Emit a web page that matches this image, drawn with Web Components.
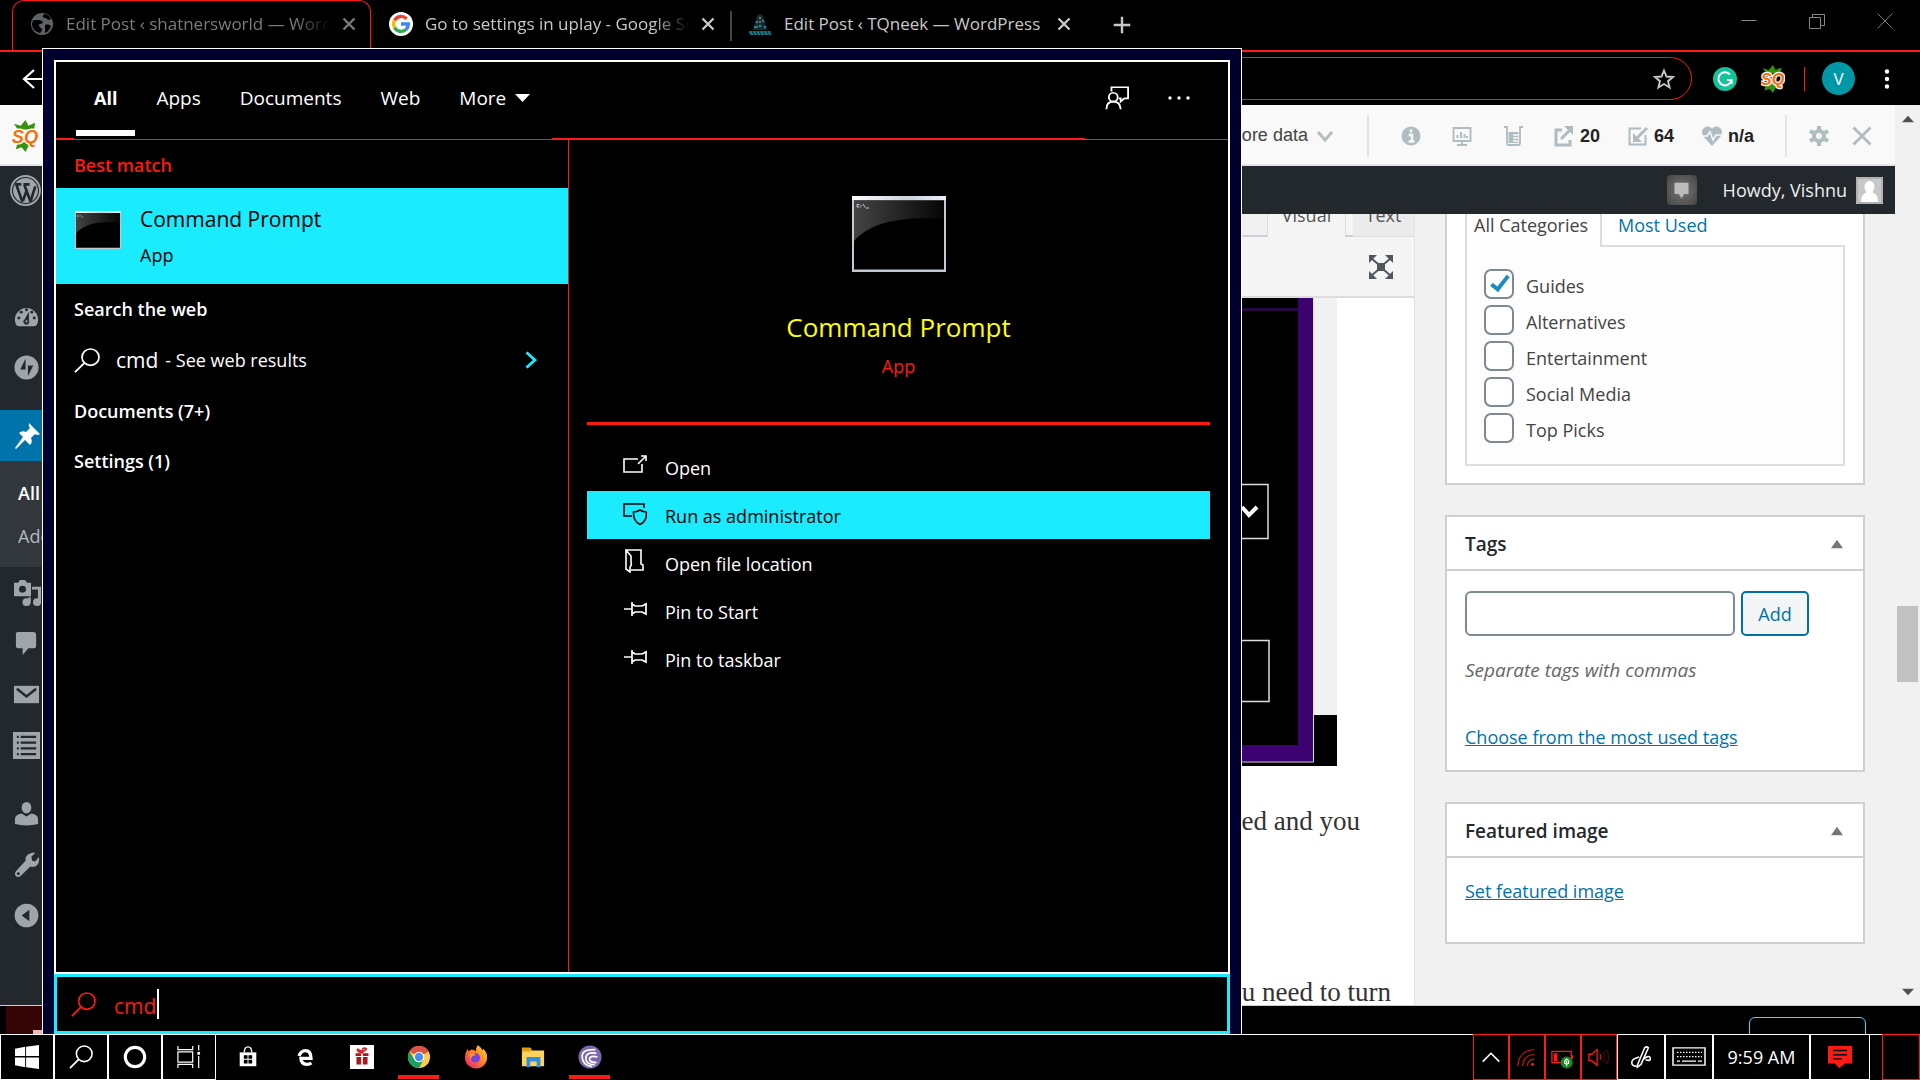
<!DOCTYPE html>
<html lang="en">
<head>
<meta charset="utf-8">
<title>Desktop</title>
<style>
html,body{margin:0;height:100%;background:#000}
body{font-family:"Open Sans","Noto Sans",sans-serif;font-size:18px;color:#fff;overflow:hidden}
</style>
</head>
<body>
<desk-top></desk-top>
<script>
const ICONS = {
globe:['0 0 24 24','<circle cx="12" cy="12" r="11" fill="#5f6368"/><path d="M3 8c3 1 6-1 9 1 2 1 0 3-2 3s-1 3 1 4 1 3-1 5c-5-1-8-5-8-9zM14 2c-2 2-1 4 1 4s2 2 4 2l2-1c-1-3-4-5-7-5zM15 13c2-1 5 0 6 1-1 3-3 6-6 7-1-2 1-3 0-5z" fill="#000"/>'],
google:['0 0 24 24','<circle cx="12" cy="12" r="12" fill="#fff"/><g fill="none" stroke-width="3.4"><path d="M17.6 6.8A7.4 7.4 0 0 0 5.6 8.4" stroke="#ea4335"/><path d="M5.6 8.4a7.4 7.4 0 0 0 0 7.2" stroke="#fbbc05"/><path d="M5.6 15.6A7.4 7.4 0 0 0 17 17.4" stroke="#34a853"/><path d="M17 17.4A7.4 7.4 0 0 0 19.4 12H12" stroke="#4285f4"/></g>'],
tq:['0 0 24 24','<path d="M5 18 9 4q3-4 6 0l4 14z" fill="#0d3038"/><g fill="#2a7f95"><circle cx="9" cy="10" r="1.3"/><circle cx="15" cy="9" r="1.3"/><circle cx="12" cy="14" r="1.3"/><circle cx="7" cy="15" r="1.3"/><circle cx="17" cy="15" r="1.3"/></g><g fill="#b9682b"><circle cx="12" cy="6" r="1.2"/><circle cx="12" cy="10" r="1"/><circle cx="9" cy="15" r="1"/></g><path d="M1 20h22M2 22h21" stroke="#137484" stroke-width="2" stroke-dasharray="3 .7"/>'],
close:['0 0 24 24','<path d="M6 6l12 12M18 6 6 18" stroke="currentColor" stroke-width="2.6"/>'],
plus:['0 0 24 24','<path d="M12 3v18M3 12h18" stroke="#c8c8c8" stroke-width="2.6"/>'],
min:['0 0 24 24','<path d="M4.5 11.5h15" stroke="#888" stroke-width="1"/>'],
restore:['0 0 24 24','<path d="M4.5 8.5h11v11h-11zM7.5 8V5.5h12v11H16" fill="none" stroke="#888"/>'],
wclose:['0 0 24 24','<path d="M4.5 4.5l15 15M19.5 4.5l-15 15" stroke="#777"/>'],
back:['0 0 24 24','<path d="M13 3 3 12l10 9M3.500 12H24" fill="none" stroke="#fff" stroke-width="2.2"/>'],
star:['0 0 24 24','<path d="M12 3.500l2.500 6 6.500.5-5 4.200 1.600 6.300L12 17l-5.600 3.500L8 14.200 3 10l6.500-.5z" fill="none" stroke="#c6c6c6" stroke-width="1.900"/>'],
gram:['0 0 24 24','<circle cx="12" cy="12" r="12" fill="#15c39a"/><path d="M17 7.500a6.600 6.600 0 1 0 1.500 5.500H14M18.600 12.500v4.500" fill="none" stroke="#fff" stroke-width="2"/>'],
sq:['0 0 28 34','<path d="M14 0l3 6 7-3-1 7H6L2 4l7 2zM14 34l-4-5-6 2 2-8h16l-1 6-4-1z" fill="#36910c"/><text x="13.500" y="24.500" text-anchor="middle" font-family="Liberation Sans" font-weight="700" font-style="italic" font-size="19" fill="#ff6d0a" stroke="#fff" stroke-width="3" paint-order="stroke" stroke-linejoin="round">SQ</text>'],
dots:['0 0 24 24','<g fill="#fff"><circle cx="12" cy="4.500" r="2.200"/><circle cx="12" cy="12" r="2.200"/><circle cx="12" cy="19.500" r="2.200"/></g>'],
chev:['0 0 24 24','<path d="M5 8l7 8 7-8" fill="none" stroke="#b4bcbe" stroke-width="3"/>'],
info:['0 0 24 24','<circle cx="12" cy="12" r="9.500" fill="#afbcc0"/><path d="M12 5.500v3M9.500 11H13v6M9.500 17.500h6" fill="none" stroke="#f9f9f9" stroke-width="2.400"/>'],
monitor:['0 0 24 24','<path d="M3.500 4h17v13h-17zM12 17v3M7 21h10" fill="none" stroke="#afbcc0" stroke-width="1.900"/><path d="M7.500 14v-3M11 14V8M14.500 14v-4M17 14v-2" stroke="#afbcc0" stroke-width="2"/>'],
beaker:['0 0 24 24','<path d="M3 3h3v16q0 2 2 2h9q2 0 2-2V3h3" fill="none" stroke="#afbcc0" stroke-width="1.800"/><path d="M7.500 8h10v11h-10z" fill="#afbcc0"/><path d="M12 11h6M12 14h6M12 17h6" stroke="#f9f9f9" stroke-width="1.300"/>'],
outl:['0 0 24 24','<path d="M10 6H4v15h14v-5" fill="none" stroke="#afbcc0" stroke-width="3"/><path d="M9 15 18 6" stroke="#afbcc0" stroke-width="3"/><path d="M12 2h9v9z" fill="#afbcc0"/>'],
inl:['0 0 24 24','<path d="M15 4.500H3.500v16h16V11" fill="none" stroke="#afbcc0" stroke-width="2"/><path d="M21 4 10 15" stroke="#afbcc0" stroke-width="3"/><path d="M7 9v9h9z" fill="#afbcc0"/>'],
heart:['0 0 24 24','<path d="M12 22 3 12C-1 5 8-1 12 5c4-6 13 0 9 7z" fill="#afbcc0"/><path d="M1 12h6l3-4 3 8 3-5h7" fill="none" stroke="#f9f9f9" stroke-width="1.600"/>'],
gear:['0 0 24 24','<circle cx="12" cy="12" r="5" fill="none" stroke="#afbcc0" stroke-width="4"/><g stroke="#afbcc0" stroke-width="4"><path d="M12 2v4M12 18v4M3 7l4 2.300M17 14.700l4 2.300M3 17l4-2.300M17 9.300 21 7"/></g>'],
bigx:['0 0 24 24','<path d="M3.500 3.500l17 17M20.500 3.500l-17 17" stroke="#afbcc0" stroke-width="2.800"/>'],
bubble:['0 0 24 24','<path d="M4 3h16v13h-5l-3 5-3-5H4z" fill="#bcbcbc"/>'],
avatar:['0 0 27 27','<path d="M0 0h27v27H0z" fill="#c8c8c8"/><path d="M1 1h25v25H1z" fill="none" stroke="#999"/><ellipse cx="13.500" cy="10" rx="5" ry="6" fill="#fff"/><path d="M5 25q0-8 6-10h5q6 2 6 10z" fill="#fff"/>'],
wp:['0 0 30 30','<circle cx="15" cy="15" r="14" fill="none" stroke="#a0a5aa" stroke-width="1.800"/><circle cx="15" cy="15" r="12" fill="#a0a5aa"/><path d="M6 9l6 17M14 10l6 16M12.500 25l4-11M20 25l4.500-14M5 9h6M13 9h6" fill="none" stroke="#23282d" stroke-width="2.600"/>'],
dash:['0 0 28 28','<path d="M3 22a12 12 0 1 1 22 0q-1 2-3 2H6q-2 0-3-2z" fill="#a0a5aa"/><g fill="#23282d"><circle cx="14" cy="7" r="1.500"/><circle cx="8.500" cy="9.500" r="1.500"/><circle cx="19.500" cy="9.500" r="1.500"/><circle cx="6" cy="15.500" r="1.500"/><circle cx="22" cy="15.500" r="1.500"/><path d="M16.500 9 12 17a3 3 0 1 0 4.500 1z"/></g><circle cx="14" cy="19" r="1.200" fill="#a0a5aa"/>'],
jet:['0 0 28 28','<circle cx="14" cy="14" r="12.500" fill="#a0a5aa"/><path d="M13 5v11H7.500zM15.500 23V12H21z" fill="#23282d"/>'],
pin:['0 0 28 28','<path d="M16 1l11 11q-3 2-5 0l-4 4q2 4-1 7l-5-5L3 27l-1-1 8-11-4-4q3-3 7-1l4-4q-2-2-1-5z" fill="#fff"/>'],
media:['0 0 28 28','<path d="M1 4h4l2-3h5l2 3h4v14H1z" fill="#a0a5aa"/><circle cx="9.500" cy="10.500" r="3.500" fill="#23282d"/><path d="M19 9.500h7.500v15" fill="none" stroke="#a0a5aa" stroke-width="3"/><path d="M16.500 19v5" stroke="#a0a5aa" stroke-width="2.500"/><circle cx="13.500" cy="24" r="4" fill="#a0a5aa"/><circle cx="24" cy="24" r="4" fill="#a0a5aa"/>'],
comment:['0 0 28 28','<path d="M5 2h16q3 0 3 3v11q0 3-3 3h-5l-6 7v-7H6q-3 0-3-3V4q0-2 2-2z" fill="#a0a5aa"/>'],
mail:['0 0 28 28','<path d="M1 5h26v18H1z" fill="#a0a5aa"/><path d="M4 8l10 8 10-8" fill="none" stroke="#23282d" stroke-width="2.600"/>'],
list:['0 0 28 28','<path d="M0 0h28v28H0z" fill="#a0a5aa"/><path d="M4 5h2M8 5h16M4 11h2M8 11h16M4 17h2M8 17h16M4 23h2M8 23h16" stroke="#23282d" stroke-width="2.400"/>'],
user:['0 0 28 28','<ellipse cx="14" cy="8" rx="5" ry="6" fill="#a0a5aa"/><path d="M2 25v-5q0-5 7-6l5 3 5-3q7 1 7 6v5q-12 3-24 0z" fill="#a0a5aa"/>'],
wrench:['0 0 28 28','<path d="M19 2q3-1 4 0l-4 4 1 4 3 1 4-5q1 8-4 10-3 1-5 0L8 26q-3 2-5 0t0-5l10-11q-1-6 6-8z" fill="#a0a5aa"/><circle cx="5.500" cy="23.500" r="1.500" fill="#23282d"/>'],
collapse:['0 0 28 28','<circle cx="14" cy="14" r="12.300" fill="#a0a5aa"/><path d="M17 8v12l-8-6z" fill="#23282d"/>'],
full:['0 0 26 24','<path d="M9 8h8v8H9z" fill="#50575e"/><path d="M3 3l7 6M23 3l-7 6M3 21l7-6M23 21l-7-6" stroke="#50575e" stroke-width="2"/><path d="M1 0h8L1 8zM25 0v8l-8-8zM1 24v-8l8 8zM25 24h-8l8-8z" fill="#50575e"/>'],
tri:['0 0 12 12','<path d="M6 1l6 10H0z" fill="currentColor"/>'],
feedback:['0 0 26 30','<path d="M7 7V1.500h18v14h-4l-4 4v-4h-2" fill="none" stroke="#fff" stroke-width="2"/><ellipse cx="9" cy="14" rx="4.800" ry="5.500" fill="none" stroke="#fff" stroke-width="2"/><path d="M1.500 29q0-9.500 7.500-9.500t8 9.500" fill="none" stroke="#fff" stroke-width="2"/>'],
more:['0 0 24 24','<g fill="#fff"><circle cx="3" cy="12" r="1.700"/><circle cx="12" cy="12" r="1.700"/><circle cx="21" cy="12" r="1.700"/></g>'],
down:['0 0 16 10','<path d="M0 0h16L8 9z" fill="#fff"/>'],
cmd:['0 0 94 76','<defs><linearGradient id="g"><stop offset="0" stop-color="#444"/><stop offset="1" stop-color="#050505"/></linearGradient><linearGradient id="t"><stop offset="0" stop-color="#fff"/><stop offset=".6" stop-color="#ccd3db"/><stop offset="1" stop-color="#eef"/></linearGradient></defs><path d="M0 0h94v76H0z" fill="#c3cad3"/><path d="M0 0h94v4H0z" fill="url(#t)"/><path d="M2 4.500h90v69H2z" fill="#000"/><path d="M2 4.500h90V23Q25 18 2 45z" fill="url(#g)"/><path d="M5 8.500h2.500M5 11h2.500M5 8.500V11M9 9v.8M9 10.500v.8M11 8l2 3.500M14 12h3" fill="none" stroke="#ddd" stroke-width=".9"/>'],
search:['0 0 26 26','<circle cx="16.500" cy="9.500" r="8.500" fill="none" stroke="currentColor" stroke-width="1.700"/><path d="M10.500 15.500 1 25" stroke="currentColor" stroke-width="1.900"/>'],
go:['0 0 12 20','<path d="M1.500 1.500 10 10l-8.500 8.500" fill="none" stroke="#1aebff" stroke-width="3"/>'],
open:['0 0 24 24','<path d="M15 6H1v13h18v-8M15 11 23 3M18 3h5v5" fill="none" stroke="currentColor" stroke-width="1.600"/>'],
admin:['0 0 24 24','<path d="M21 7V3H1v12h8" fill="none" stroke="currentColor" stroke-width="1.600"/><path d="M17 9q3 2 6.500 2 .5 9-6.500 12.500Q10 20 10.500 11 14 11 17 9z" fill="none" stroke="currentColor" stroke-width="1.600"/>'],
loc:['0 0 24 24','<path d="M3 1h15v14l2 1v5H8M3 1v19l4 3V18q2-2 1-5V7z" fill="none" stroke="currentColor" stroke-width="1.600"/>'],
pinr:['0 0 24 24','<path d="M1 12h8M9 5v14M9 7l3 2h7l4-2v10l-4-2h-7l-3 2" fill="none" stroke="currentColor" stroke-width="1.700"/>'],
win:['0 0 26 26','<path d="M0 4l11-2v10H0zM12 2l14-2v12H12zM0 13.500h11V24L0 22zM12 13.500h14V26l-14-2z" fill="#fff"/>'],
cortana:['0 0 26 26','<circle cx="13" cy="13" r="10.500" fill="none" stroke="#fff" stroke-width="3.400"/>'],
taskview:['0 0 26 26','<path d="M1 1v4h16V1M1 7.500h16v11H1zM1 25v-4h16v4M23.500 0v6M23.500 12v13" fill="none" stroke="#fff" stroke-width="1.300"/><path d="M22 7.500h3v3h-3z" fill="#fff"/>'],
store:['0 0 26 26','<path d="M4 8h18v15H4z" fill="#fff"/><path d="M9 8q0-6 4-6t4 6" fill="none" stroke="#fff" stroke-width="1.500"/><path d="M8.500 11h4v4h-4zM13.500 11h4v4h-4zM8.500 16h4v4h-4zM13.500 16h4v4h-4z" fill="#000"/>'],
edge:['0 0 26 26','<path d="M7 14.500h12.500q0-8.500-6-8.500-5 0-7 6M8.500 13q0 8 6.500 8 3 0 5-1.500" fill="none" stroke="#fff" stroke-width="3.600"/>'],
gift:['0 0 26 26','<path d="M0 0h26v26H0z" fill="#fff"/><path d="M7 13h5v8H7zM14 13h5v8h-5zM6 9h6v3H6zM14 9h6v3h-6z" fill="#b3141c"/><path d="M13 8Q8 8 8 5.500T13 8q0-5 3.500-4.500T13 8" fill="none" stroke="#d8232a" stroke-width="1.800"/>'],
chrome:['0 0 26 26','<circle cx="13" cy="13" r="12" fill="#ffcd40"/><path d="M13 13 2.600 7A12 12 0 0 1 23.400 7z" fill="#de5246"/><path d="M2.600 7A12 12 0 0 0 13 25l5-9-5-3-5 3z" fill="#1a9f5f"/><circle cx="13" cy="13" r="5.800" fill="#fff"/><circle cx="13" cy="13" r="4.500" fill="#4c8bf5"/>'],
firefox:['0 0 26 26','<defs><linearGradient id="f" x1="1" x2="0" y2="1"><stop offset="0" stop-color="#ffe226"/><stop offset=".5" stop-color="#ff7a2a"/><stop offset="1" stop-color="#e31587"/></linearGradient></defs><path d="M15 0q4 3 5 6l1-2q4 4 4 9a12 12 0 0 1-24 1Q1 8 4 4l1 3 3-2q3 0 5 2 0-5 2-7z" fill="url(#f)"/><circle cx="12.500" cy="14" r="5" fill="#7542e5"/><path d="M6 9q4-1 7 2-5 0-5 4-3-2-2-6z" fill="#ff9a1f"/>'],
folder:['0 0 26 26','<path d="M1 3h9l2 3h13v17H1z" fill="#ffd35c"/><path d="M1 3h9l2 3-2 1H1z" fill="#e59f0b"/><path d="M6 24V13h15v11h-4v-6h-7v6z" fill="#2f8fdd"/>'],
torrent:['0 0 26 26','<circle cx="13" cy="13" r="12.500" fill="#7a67ad"/><path d="M19 5Q4 4 4.500 13T15 23.500M20 9Q9 7 8.500 14T18 21.500M21 13q-8-2-8.500 2t7.500 4" fill="none" stroke="#fff" stroke-width="1.900"/>'],
up:['0 0 26 26','<path d="M4 18 13 9l9 9" fill="none" stroke="#fff" stroke-width="1.700"/>'],
wifi:['0 0 26 26','<path d="M3 23Q4 6 21 5M8 23q1-12 13-13M13 23q1-7 8-8" fill="none" stroke="#c01a12" stroke-width="1.300"/><circle cx="19" cy="21" r="1.600" fill="#ff1a12"/>'],
battery:['0 0 26 26','<path d="M1 7h21v12H1zM23.500 11v4" fill="none" stroke="#ff1a12" stroke-width="1.400"/><path d="M3 9h4v8.500H3z" fill="#ff1a12"/><circle cx="17" cy="19" r="6.500" fill="#14891f"/><path d="M17 15q3 2 2 5l-2 1-2-1q-1-3 2-5zM17 17v6" fill="none" stroke="#fff" stroke-width="1.200"/>'],
sound:['0 0 26 26','<path d="M2 10h3l6-5v17l-6-5H2z" fill="none" stroke="#ff1a12" stroke-width="1.400"/><path d="M14 10q2 3 0 6" fill="none" stroke="#c01a12" stroke-width="1.400"/><path d="M17.500 7.500q4 6 0 11M20.500 5q6 8 0 16" fill="none" stroke="#4a0805" stroke-width="1.400"/>'],
pen:['0 0 26 26','<path d="M9 22 17 3q2-2 4 0l-8 18-4 3zM15 16q7-6 8-2t-5 2M11 13q-8 2-8 6t5 4" fill="none" stroke="#fff" stroke-width="1.700"/>'],
kbd:['0 0 34 22','<path d="M1 1h32v19H1z" fill="none" stroke="#fff" stroke-width="1.500"/><path d="M5 6h25M5 10.500h25" stroke="#fff" stroke-width="1.300" stroke-dasharray="1.500 1.500"/><path d="M5 15.500h3M10 15.500h14M26 15.500h4" stroke="#fff" stroke-width="1.300"/>'],
note:['0 0 24 26','<path d="M0 1h24v19h-7l-6 5-4-5H0z" fill="#ff1a12"/><path d="M5 6h14M5 10.500h14M5 15h9" stroke="#000" stroke-width="1.500"/>']
};
const RESET = `*{box-sizing:border-box}:host{box-sizing:border-box}button{font:inherit;color:inherit;background:none;border:0;padding:0;margin:0;display:flex;align-items:center;justify-content:center}a{color:#0073aa}`;
function define(name, css, html, setup){
  const t = document.createElement('template');
  t.innerHTML = `<style>${RESET}${css}</style>${html}`;
  customElements.define(name, class extends HTMLElement{
    connectedCallback(){
      if(this.shadowRoot) return;
      this.attachShadow({mode:'open'}).append(t.content.cloneNode(true));
      if(setup) setup(this, this.shadowRoot);
    }
  });
}

define('ui-icon', `:host{display:inline-flex;flex:none;width:var(--w,24px);height:var(--h,24px)}svg{width:100%;height:100%;display:block}`, `<svg aria-hidden="true" preserveAspectRatio="none"></svg>`, (el, r) => {
  const [box, body] = ICONS[el.getAttribute('name')];
  const svg = r.querySelector('svg');
  svg.setAttribute('viewBox', box);
  svg.innerHTML = body;
});

/* browser chrome */
define('browser-tab', `
:host{display:flex;align-items:center;height:50px;padding:0 10px 3px 17px;flex:none;width:359px;color:#c8c8c8;border:1px solid transparent;border-bottom:0}
:host([active]){border-color:#ff1a12;border-radius:12px 12px 0 0;color:#7c7c7c}
span{flex:1;margin-left:12px;white-space:nowrap;overflow:hidden;font-size:17px;line-height:24px;-webkit-mask-image:linear-gradient(90deg,#000 calc(100% - 36px),transparent)}
:host([whole]) span{-webkit-mask-image:none}
button{flex:none;margin-left:8px}`,
`<slot name="icon"></slot><span><slot></slot></span><button aria-label="Close tab"><ui-icon name="close" style="--w:22px;--h:22px"></ui-icon></button>`);

define('browser-chrome', `
:host{display:block;background:#000;flex:none}
.tabs{display:flex;height:50px;padding-left:12px;align-items:flex-start}
.sep{width:2px;height:30px;background:#444;margin:11px -2px 0 0}
.tabs browser-tab[whole]{width:356px}
.new{height:50px;width:44px;margin-left:14px}
.ctl{margin-left:auto;display:flex;padding-right:23px;gap:44px;padding-top:9px}
.bar{display:flex;align-items:center;height:55px;border-top:2px solid #ff1a12;padding:0 21px}
.omni{flex:1;margin-left:60px;height:43px;border:1px solid #ff1a12;border-radius:22px;display:flex;align-items:center;justify-content:flex-end;padding-right:15px}
.line{width:1px;height:24px;background:#ff1a12;margin:0 17px 0 19px}
.me{width:33px;height:33px;border-radius:50%;background:#0097a7;color:#fff;font-size:17px}`,
`<div class="tabs">
<browser-tab active><ui-icon slot="icon" name="globe"></ui-icon>Edit Post ‹ shatnersworld — WordPress</browser-tab>
<browser-tab><ui-icon slot="icon" name="google"></ui-icon>Go to settings in uplay - Google Search</browser-tab>
<div class="sep"></div>
<browser-tab whole><ui-icon slot="icon" name="tq"></ui-icon>Edit Post ‹ TQneek — WordPress</browser-tab>
<button class="new" aria-label="New tab"><ui-icon name="plus" style="--w:22px;--h:22px"></ui-icon></button>
<div class="ctl"><button aria-label="Minimize"><ui-icon name="min"></ui-icon></button><button aria-label="Restore"><ui-icon name="restore"></ui-icon></button><button aria-label="Close"><ui-icon name="wclose"></ui-icon></button></div>
</div>
<div class="bar"><button aria-label="Back"><ui-icon name="back"></ui-icon></button>
<div class="omni"><ui-icon name="star"></ui-icon></div>
<ui-icon name="gram" style="margin-left:21px"></ui-icon><ui-icon name="sq" style="--h:28px;margin-left:24px"></ui-icon><div class="line"></div>
<button class="me" aria-label="Profile">V</button><ui-icon name="dots" style="margin-left:20px"></ui-icon></div>`);

define('seo-bar', `
:host{display:flex;align-items:center;height:61px;flex:none;background:#f9f9f9;border-bottom:2px solid #e2e4e7;font:18px "Liberation Sans",sans-serif;color:#444;padding:2px 21px 0 12px}
.r{margin-left:auto;display:flex;align-items:center}
i{width:2px;height:42px;background:#e2e4e7;margin:0 30px}
b{color:#222;margin:0 26px 0 4px;line-height:24px}
.g{margin-right:27px}`,
`<ui-icon name="sq" style="--w:27px;--h:32px"></ui-icon><div class="r">More data<ui-icon name="chev" style="margin-left:5px"></ui-icon><i></i>
<ui-icon class="g" name="info"></ui-icon><ui-icon class="g" name="monitor"></ui-icon><ui-icon class="g" name="beaker"></ui-icon>
<ui-icon name="outl"></ui-icon><b>20</b><ui-icon name="inl"></ui-icon><b>64</b><ui-icon name="heart"></ui-icon><b>n/a</b><i style="margin-left:5px;margin-right:20px"></i>
<ui-icon name="gear" style="margin-right:19px"></ui-icon><ui-icon name="bigx"></ui-icon></div>`);

define('admin-bar', `
:host{display:flex;align-items:center;height:48px;flex:none;background:#23282d;color:#eee;padding:0 12px 0 10px;font-size:18px}
.c{margin-left:auto;width:30px;height:30px;border-radius:4px;background:radial-gradient(#777,#444);display:flex;align-items:center;justify-content:center}
span{margin:0 9px 0 26px}`,
`<ui-icon name="wp" style="--w:31px;--h:31px"></ui-icon><div class="c"><ui-icon name="bubble" style="--w:21px;--h:21px"></ui-icon></div><span>Howdy, Vishnu</span><ui-icon name="avatar" style="--w:27px;--h:27px"></ui-icon>`);

define('admin-menu', `
:host{display:block;flex:none;width:230px;background:#23282d;padding-top:77px}
nav>a{display:flex;align-items:center;height:51px;padding-left:13px}
.on{background:#0073aa}
.gap{height:17px}
.sub{background:#32373c;padding:11px 0 9px 18px;height:106px}
.sub a{display:block;line-height:43px;font-size:18px;color:#b4b9be;text-decoration:none}
.sub a:first-child{color:#fff;font-weight:600}
ui-icon{--w:27px;--h:27px}`,
`<nav><a href="#dash" aria-label="Dashboard"><ui-icon name="dash"></ui-icon></a><a href="#jet" aria-label="Jetpack"><ui-icon name="jet"></ui-icon></a><div class="gap"></div>
<a class="on" href="#posts" aria-label="Posts"><ui-icon name="pin" style="--w:28px;--h:28px"></ui-icon></a><div class="sub"><a href="#all">All Posts</a><a href="#add">Add New</a></div>
<a href="#media" aria-label="Media"><ui-icon name="media" style="--w:28px"></ui-icon></a><a href="#com" aria-label="Comments"><ui-icon name="comment"></ui-icon></a><a href="#mail" aria-label="Mail"><ui-icon name="mail"></ui-icon></a><a href="#list" aria-label="Pages"><ui-icon name="list"></ui-icon></a><div class="gap"></div>
<a href="#user" aria-label="Users"><ui-icon name="user"></ui-icon></a><a href="#tools" aria-label="Tools"><ui-icon name="wrench"></ui-icon></a><a href="#col" aria-label="Collapse"><ui-icon name="collapse"></ui-icon></a></nav>`);

define('post-editor', `
:host{display:flex;flex-direction:column;flex:1;min-width:0;background:#fff;border-right:1px solid #e2e4e7;overflow:hidden}
.tabs{display:flex;flex:none;justify-content:flex-end;height:46px;margin-top:-23px;background:#f5f5f5;color:#555;font-size:18px}
.tabs button{align-items:flex-start;padding-top:12px;line-height:24px}
.rest{flex:1;background:#f1f1f1;border-bottom:2px solid #ccd0d4;border-right:1px solid #ddd}
.v{width:77px}.s{width:8px;border-left:1px solid #ddd;border-bottom:2px solid #ccd0d4}.tabs .t{width:61px;background:#ebebeb;border-bottom:1px solid #ddd}
.tools{display:flex;flex:none;justify-content:flex-end;align-items:center;height:61px;background:#f5f5f5;border-bottom:2px solid #ddd;padding-right:20px}
.pic{display:block;flex:none;width:400px;height:468px;margin:0 77px 0 auto}
p{margin:0;text-align:right;font:27px/36px "Liberation Serif",serif;color:#333}
.a{padding:37px 54px 0 0}.b{padding:135px 23px 0 0}`,
`<div class="tabs"><div class="rest"></div><button class="v">Visual</button><div class="s"></div><button class="t">Text</button></div>
<div class="tools"><ui-icon name="full" style="--w:26px"></ui-icon></div>
<svg class="pic" viewBox="0 0 400 468" aria-hidden="true"><path d="M0 0h400v468H0z" fill="#000"/><path d="M377 0h23v417h-23z" fill="#f1f1f1"/><path d="M361 0h15v463H0v-16h361z" fill="#3b0270"/><path d="M0 11.500h361" stroke="#3b0270" stroke-width="2"/><path d="M376.500 0v464H0" fill="none" stroke="#ddd"/><path d="M100 186.500h231v54H100M100 342.500h232v61H100" fill="none" stroke="#ddd" stroke-width="1.500"/><path d="M305 209l7 8 8-8" fill="none" stroke="#fff" stroke-width="4"/></svg>
<p class="a">ned and you</p><p class="b">u need to turn</p>`);

define('check-row', `
:host{display:block;height:36px}
label{display:flex;align-items:flex-start;font-size:18px;line-height:34px;color:#444}
input{appearance:none;margin:0 12px 0 0;width:30px;height:30px;border:2px solid #7e8993;border-radius:7px;background:#fff;position:relative}
input:checked::after{content:"";position:absolute;left:9px;top:1px;width:6px;height:15px;border:solid #1e8cbe;border-width:0 4px 4px 0;transform:rotate(38deg)}`,
`<label><input type="checkbox"><slot></slot></label>`, (el, r) => { r.querySelector('input').checked = el.hasAttribute('checked'); });

define('meta-box', `
:host{display:block;border:2px solid #ccd0d4;background:#fff;color:#23282d;margin-bottom:30px}
header{display:flex;align-items:center;justify-content:space-between;height:54px;border-bottom:2px solid #ccd0d4;padding:2px 20px 0 18px}
:host([plain]) header{display:none}
h2{margin:0;font-size:19px;font-weight:600;line-height:26px}
.in{padding:20px 18px}
:host([plain]) .in{padding:19px 18px 17px}
button{color:#72777c}`,
`<header><h2></h2><button aria-label="Toggle panel"><ui-icon name="tri" style="--w:12px;--h:10px"></ui-icon></button></header><div class="in"><slot></slot></div>`,
(el, r) => { r.querySelector('h2').textContent = el.getAttribute('heading') || ''; });

define('post-side', `
:host{display:block;flex:none;width:480px;background:#f1f1f1;padding:0 30px;font-size:18px;line-height:26px}
.cats{margin-top:-31px}
.tabs{display:flex;height:41px}
.tabs a{padding:1px 16px 0;line-height:40px;text-decoration:none;white-space:nowrap}
.tabs a:first-child{width:137px;padding:0 7px;line-height:38px;border:2px solid #ddd;border-bottom:0;background:#fdfdfd;color:#444;height:43px;position:relative}
.panel{border:2px solid #ddd;background:#fdfdfd;height:221px;padding:22px 17px}
form{display:flex;gap:6px}
input{width:270px;height:45px;border:2px solid #7e8993;border-radius:6px;background:#fff}
.add{width:68px;height:45px;border:2px solid #0071a1;border-radius:5px;background:#f3f5f6;color:#0071a1}
em{display:block;margin-top:21px;color:#666;font-size:19px}
.pop{display:block;margin-top:41px}.img{display:block;margin:0 0 18px}`,
`<meta-box plain class="cats"><div class="tabs"><a href="#allcat">All Categories</a><a href="#most">Most Used</a></div>
<div class="panel"><check-row checked>Guides</check-row><check-row>Alternatives</check-row><check-row>Entertainment</check-row><check-row>Social Media</check-row><check-row>Top Picks</check-row></div></meta-box>
<meta-box heading="Tags"><form><input type="text" aria-label="Add tag"><button type="button" class="add">Add</button></form><em>Separate tags with commas</em><a class="pop" href="#tags">Choose from the most used tags</a></meta-box>
<meta-box heading="Featured image"><a class="img" href="#img">Set featured image</a></meta-box>`);

define('page-scroll', `
:host{display:flex;flex-direction:column;align-items:center;justify-content:space-between;width:25px;flex:none;background:#f1f1f1;padding:10px 0 9px;color:#505050}
.track{flex:1;display:flex;flex-direction:column;width:21px}
.track::before{content:"";flex:486}.track::after{content:"";flex:308}
.thumb{height:76px;background:#c1c1c1}`,
`<ui-icon name="tri" style="--w:12px;--h:8px"></ui-icon><div class="track"><div class="thumb"></div></div><ui-icon name="tri" style="--w:12px;--h:8px;transform:rotate(180deg)"></ui-icon>`);

define('download-shelf', `
:host{display:flex;height:29px;flex:none;background:#000;overflow:hidden;border-top:1px solid #ccc;padding-left:6px;align-items:flex-start}
.file{width:300px;height:29px;background:#350505;padding:24px 0 0 27px}
.file div{width:20px;height:20px;background:#f4b5b5}
button{margin:11px 54px 0 auto;width:117px;height:46px;border:1px solid #1aebff;border-radius:6px;font-size:18px;line-height:24px;font-weight:600;padding-top:2px}`,
`<div class="file"><div></div></div><button>Show all</button>`);

define('browser-window', `
:host{display:flex;flex-direction:column;flex:1;min-height:0}
.page{display:flex;flex:1;min-height:0}
main{flex:1;min-width:0;display:flex;flex-direction:column}
.body{flex:1;min-height:0;display:flex;overflow:hidden}`,
`<browser-chrome></browser-chrome><div class="page"><main><seo-bar></seo-bar><admin-bar></admin-bar><div class="body"><admin-menu></admin-menu><post-editor></post-editor><post-side></post-side></div></main><page-scroll></page-scroll></div><download-shelf></download-shelf>`);

/* search flyout */
define('action-row', `
:host{display:block}
button{width:100%;height:48px;justify-content:flex-start;padding:2px 0 0 36px;font-size:18px;line-height:24px}
::slotted(ui-icon){margin:0 18px 6px 0}
:host([selected]) button{background:#1aebff;color:#000}`,
`<button><slot name="icon"></slot><slot></slot></button>`);

define('search-flyout', `
:host{display:flex;flex-direction:column;position:absolute;left:42px;top:48px;bottom:46px;width:62.5%;background:#00002f;border:1px solid #fff;border-bottom:0;padding:11px 11px 0;font-size:18px;line-height:26px}
.box{flex:1;min-height:0;display:flex;flex-direction:column;background:#000;border:2px solid #fff}
header{display:flex;height:78px;flex:none;padding-left:20px;gap:3px;font-size:19px;border-bottom:1px solid #ff1a12;background:linear-gradient(#ff1a12,#ff1a12) 0 100%/18px 1px no-repeat,linear-gradient(#ff1a12,#ff1a12) 496px 100%/533px 1px no-repeat}
header button{height:74px;padding:4px 18px 0;border-bottom:6px solid transparent}
header .on{font-weight:700;font-size:18px;border-color:#fff}
.right{margin-left:auto;display:flex;padding-right:37px;gap:38px}
.right button{padding:4px 0 0}
.cols{flex:1;display:grid;grid-template-columns:513fr 659fr;min-height:0}
.l{border-right:1px solid #ff1a12}
.r{padding:56px 18px 0}
h3{margin:0;font-size:18px;font-weight:600;line-height:50px;padding-left:18px}
.best{color:#ff1a12;line-height:48px;padding-top:1px;margin-bottom:-1px}
.hit{width:100%;height:96px;background:#1aebff;color:#000;justify-content:flex-start;padding-left:19px;text-align:left}
.hit ui-icon{margin-bottom:12px}
.hit div{margin-left:19px;padding-top:1px}
.hit strong{font-weight:400;font-size:21px;line-height:36px;display:block}
.hit span{display:block;line-height:36px}
.web{width:100%;height:52px;justify-content:flex-start;padding:0 31px 0 18px}
.web b{font-weight:400;font-size:21px;margin:0 7px 0 16px}
.web .go{margin-left:auto}
.head{display:flex;flex-direction:column;align-items:center;height:229px;border-bottom:3px solid #ff1a12;margin-bottom:18px}
h2{margin:37px 0 0;font-size:26px;font-weight:400;line-height:36px;color:#ff0}
.head span{color:#ff1a12;margin-top:8px}
label{flex:none;display:flex;align-items:center;height:60px;border:3px solid #1aebff;background:#000;color:#ff1a12;padding-left:14px}
input{font:21px/30px "Open Sans",sans-serif;color:#ff1a12;background:none;border:0;outline:0;padding:3px 0 0;margin-left:18px;width:43px;field-sizing:content;caret-color:transparent}
.caret{width:2px;height:30px;background:#fff}`,
`<div class="box"><header><button class="on">All</button><button>Apps</button><button>Documents</button><button>Web</button><button>More<ui-icon name="down" style="--w:15px;--h:9px;margin-left:9px"></ui-icon></button>
<div class="right"><button aria-label="Feedback"><ui-icon name="feedback"></ui-icon></button><button aria-label="Options"><ui-icon name="more"></ui-icon></button></div></header>
<div class="cols"><div class="l"><h3 class="best">Best match</h3>
<button class="hit"><ui-icon name="cmd" style="--w:46px;--h:38px"></ui-icon><div><strong>Command Prompt</strong><span>App</span></div></button>
<h3>Search the web</h3><button class="web"><ui-icon name="search" style="--w:26px;--h:25px"></ui-icon><b>cmd</b>- See web results<ui-icon class="go" name="go" style="--w:12px;--h:18px"></ui-icon></button>
<h3>Documents (7+)</h3><h3>Settings (1)</h3></div>
<div class="r"><div class="head"><ui-icon name="cmd" style="--w:94px;--h:76px"></ui-icon><h2>Command Prompt</h2><span>App</span></div>
<action-row><ui-icon slot="icon" name="open"></ui-icon>Open</action-row><action-row selected><ui-icon slot="icon" name="admin"></ui-icon>Run as administrator</action-row><action-row><ui-icon slot="icon" name="loc"></ui-icon>Open file location</action-row><action-row><ui-icon slot="icon" name="pinr"></ui-icon>Pin to Start</action-row><action-row><ui-icon slot="icon" name="pinr"></ui-icon>Pin to taskbar</action-row></div></div></div>
<label><ui-icon name="search" style="--w:25px;--h:25px"></ui-icon><input type="text" value="cmd" aria-label="Search"><span class="caret"></span></label>`);

/* taskbar */
define('task-button', `
:host{display:flex;flex:none;width:57px;height:46px}
button{width:100%;position:relative}
:host([boxed]){width:54px}
:host([boxed]) button{border:1px solid #fff}
:host([running]) button::after{content:"";position:absolute;left:8px;right:8px;bottom:1px;height:4px;background:#ff1a12}`,
`<button><slot></slot></button>`, (el, r) => r.querySelector('button').setAttribute('aria-label', el.getAttribute('label')));

define('tray-button', `
:host{display:flex;flex:none;width:36px;height:46px;--c:#ff1a12}
:host([wide]){width:48px;--c:#fff}
:host([clock]){width:97px;--c:#fff}
:host([note]){width:60px;--c:#fff}
:host([desk]){width:38px;margin-left:12px}
button{width:100%;border:1px solid var(--c);font-size:18px;white-space:nowrap}`,
`<button><slot></slot></button>`, (el, r) => { if(el.hasAttribute('label')) r.querySelector('button').setAttribute('aria-label', el.getAttribute('label')); });

define('task-bar', `
:host{display:flex;flex:none;height:46px;background:#000;border-top:0;position:relative;z-index:2;box-shadow:inset 0 1px #fff}
.pinned{display:flex;margin-left:3px}
.tray{display:flex;margin-left:auto}
ui-icon{--w:24px;--h:24px}`,
`<task-button boxed label="Start"><ui-icon name="win"></ui-icon></task-button><task-button boxed label="Search"><ui-icon name="search"></ui-icon></task-button><task-button boxed label="Cortana"><ui-icon name="cortana"></ui-icon></task-button><task-button boxed label="Task view"><ui-icon name="taskview"></ui-icon></task-button>
<div class="pinned"><task-button label="Store"><ui-icon name="store"></ui-icon></task-button><task-button label="Edge"><ui-icon name="edge"></ui-icon></task-button><task-button label="Gift"><ui-icon name="gift"></ui-icon></task-button><task-button running label="Chrome"><ui-icon name="chrome"></ui-icon></task-button><task-button label="Firefox"><ui-icon name="firefox"></ui-icon></task-button><task-button label="Files"><ui-icon name="folder"></ui-icon></task-button><task-button running label="Torrent"><ui-icon name="torrent"></ui-icon></task-button></div>
<div class="tray"><tray-button label="Show hidden icons"><ui-icon name="up"></ui-icon></tray-button><tray-button label="Network"><ui-icon name="wifi"></ui-icon></tray-button><tray-button label="Battery"><ui-icon name="battery"></ui-icon></tray-button><tray-button label="Volume"><ui-icon name="sound"></ui-icon></tray-button><tray-button wide label="Pen"><ui-icon name="pen"></ui-icon></tray-button><tray-button wide label="Keyboard"><ui-icon name="kbd" style="--w:34px;--h:20px"></ui-icon></tray-button><tray-button clock>9:59 AM</tray-button><tray-button note label="Notifications"><ui-icon name="note"></ui-icon></tray-button><tray-button desk label="Show desktop"></tray-button></div>`);

define('desk-top', `:host{display:flex;flex-direction:column;position:relative;height:100vh;overflow:hidden;background:#000}`,
`<browser-window></browser-window><search-flyout></search-flyout><task-bar></task-bar>`);
</script>
</body>
</html>
